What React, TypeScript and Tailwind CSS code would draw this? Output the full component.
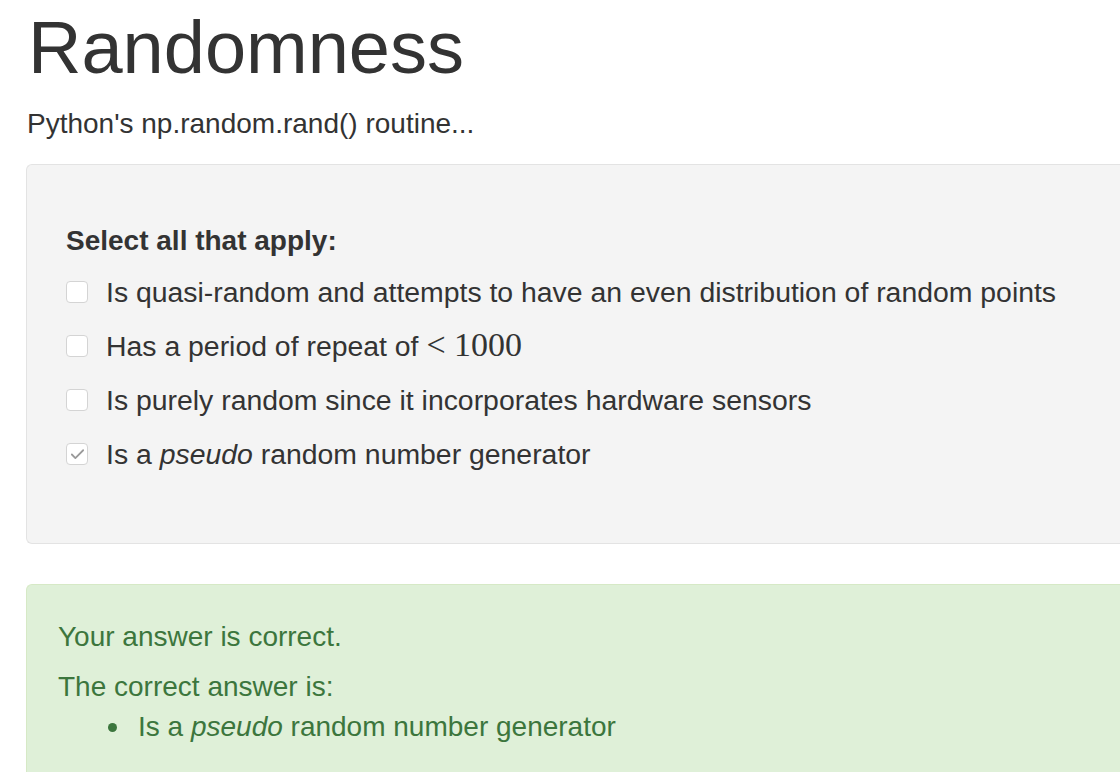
import { Check } from 'lucide-react'

const options = [
  { id: 'a', checked: false, label: <>Is quasi-random and attempts to have an even distribution of random points</> },
  {
    id: 'b',
    checked: false,
    label: (
      <>
        Has a period of repeat of{' '}
        <span className="font-['Liberation_Serif',serif] text-[34px] leading-none">&lt; 1000</span>
      </>
    ),
  },
  { id: 'c', checked: false, label: <>Is purely random since it incorporates hardware sensors</> },
  {
    id: 'd',
    checked: true,
    label: (
      <>
        Is a <em>pseudo</em> random number generator
      </>
    ),
  },
]

export default function App() {
  return (
    <div className="min-h-[772px] w-[1120px] overflow-hidden bg-white font-['Liberation_Sans',Arial,sans-serif] text-[#333333]">
      <div className="pl-[26px]">
        {/* Title */}
        <h1 className="pl-[2px] pt-[8px] text-[74px] leading-[80px] font-normal">Randomness</h1>
        <p className="pl-[1px] mt-[18px] text-[28px] leading-[36px]">Python's np.random.rand() routine...</p>

        {/* Question */}
        <div className="mt-[22px] w-[1120px] h-[380px] rounded-l-[6px] border border-r-0 border-[#e3e3e3] bg-[#f4f4f4] pl-[39px] pt-[58px]">
          <div className="text-[28px] font-bold leading-[36px]">Select all that apply:</div>
          <div className="mt-[6px] flex flex-col">
            {options.map((o) => (
              <label key={o.id} className="flex h-[54px] items-center gap-[18px]">
                <span className="flex h-[22px] w-[22px] shrink-0 items-center justify-center rounded-[4px] border border-[#d4d4d4] bg-white">
                  {o.checked && <Check className="h-[17px] w-[17px] text-[#9a9a9a]" strokeWidth={2.5} />}
                </span>
                <span className="text-[28.4px] leading-[36px]">{o.label}</span>
              </label>
            ))}
          </div>
        </div>

        {/* Feedback */}
        <div className="mt-[40px] w-[1120px] h-[200px] rounded-tl-[6px] border border-r-0 border-[#d6e9c6] bg-[#dff0d8] pl-[31px] pt-[34px] text-[#3c763d]">
          <p className="text-[28px] leading-[36px]">Your answer is correct.</p>
          <p className="mt-[14px] text-[28px] leading-[36px]">The correct answer is:</p>
          <div className="mt-[4px] flex items-center pl-[50px] text-[28px] leading-[36px]">
            <span className="h-[9px] w-[9px] shrink-0 rounded-full bg-[#3c763d]" />
            <span className="pl-[21px]">
              Is a <em>pseudo</em> random number generator
            </span>
          </div>
        </div>
      </div>
    </div>
  )
}
